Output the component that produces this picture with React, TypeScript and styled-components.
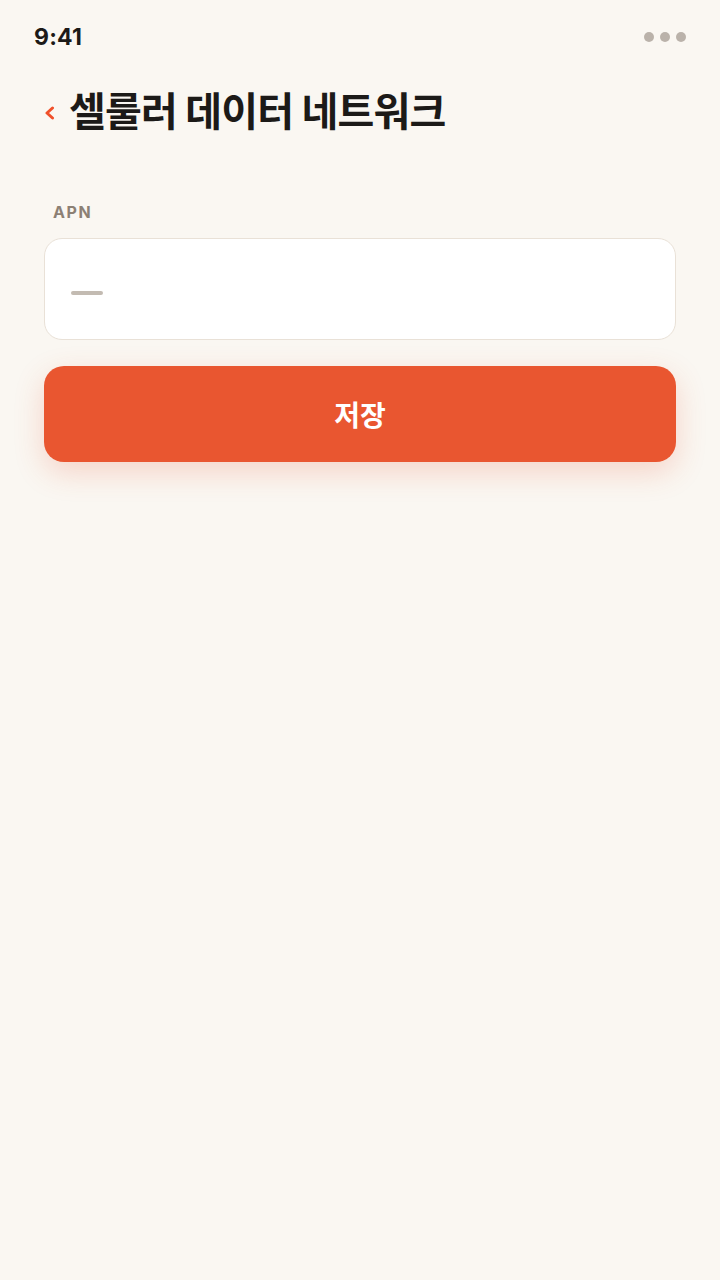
import styled, { createGlobalStyle } from 'styled-components';

const GlobalStyle = createGlobalStyle`
  html, body {
    margin: 0;
    padding: 0;
    background: #faf7f2;
  }
  * {
    box-sizing: border-box;
  }
  body {
    font-family: Inter, "Noto Sans CJK KR", sans-serif;
  }
`;

const Screen = styled.div`
  width: 720px;
  min-height: 1280px;
  background: #faf7f2;
  display: flex;
  flex-direction: column;
`;

const StatusBar = styled.div`
  height: 74px;
  padding: 22px 34px 0 34px;
  display: flex;
  justify-content: space-between;
  align-items: flex-start;
`;

const Time = styled.div`
  font-family: Inter, sans-serif;
  font-weight: 700;
  font-size: 23px;
  line-height: 30px;
  letter-spacing: 0.2px;
  color: #1c1a18;
`;

const Dots = styled.div`
  display: flex;
  gap: 6px;
  padding-top: 10px;
`;

const Dot = styled.span`
  width: 10px;
  height: 10px;
  border-radius: 50%;
  background: #bab2aa;
`;

const Header = styled.div`
  display: flex;
  align-items: center;
  gap: 14px;
  padding: 0 44px;
  height: 70px;
`;

const BackButton = styled.button`
  border: 0;
  background: none;
  padding: 8px 0 0 0;
  width: 11px;
  height: 40px;
  display: flex;
  align-items: center;
  cursor: pointer;
`;

const Title = styled.h1`
  margin: 0;
  font-family: "Noto Sans CJK KR", sans-serif;
  font-weight: 700;
  font-size: 40px;
  letter-spacing: -0.8px;
  line-height: 48px;
  color: #1c1a18;
`;

const Form = styled.div`
  padding: 58px 44px 0 44px;
  display: flex;
  flex-direction: column;
`;

const Label = styled.label`
  font-family: Inter, sans-serif;
  font-weight: 700;
  font-size: 16px;
  letter-spacing: 1.6px;
  color: #8c8074;
  padding-left: 9px;
  line-height: 20px;
  margin-bottom: 16px;
`;

const Field = styled.div`
  height: 102px;
  background: #ffffff;
  border: 1px solid #e9e1d7;
  border-radius: 18px;
  display: flex;
  align-items: center;
  padding: 0 26px;
  margin-bottom: 26px;
`;

const Placeholder = styled.span`
  width: 32px;
  height: 4px;
  border-radius: 2px;
  background: #c3bbb2;
  margin-top: 8px;
`;

const SaveButton = styled.button`
  height: 96px;
  border: 0;
  border-radius: 20px;
  background: #e95630;
  color: #ffffff;
  font-family: "Noto Sans CJK KR", sans-serif;
  font-weight: 700;
  font-size: 28px;
  box-shadow: 0 10px 30px rgba(233, 86, 48, 0.22);
  cursor: pointer;
`;

export default function App() {
  return (
    <Screen>
      <GlobalStyle />
      <StatusBar>
        <Time>9:41</Time>
        <Dots>
          <Dot />
          <Dot />
          <Dot />
        </Dots>
      </StatusBar>
      <Header>
        <BackButton aria-label="back">
          <svg width="11" height="14" viewBox="0 0 11 14">
            <path d="M8.5 2 L3 7 L8.5 12" fill="none" stroke="#f0502a" strokeWidth="3" strokeLinecap="round" strokeLinejoin="round" />
          </svg>
        </BackButton>
        <Title>셀룰러 데이터 네트워크</Title>
      </Header>
      <Form>
        <Label>APN</Label>
        <Field>
          <Placeholder />
        </Field>
        <SaveButton>저장</SaveButton>
      </Form>
    </Screen>
  );
}
